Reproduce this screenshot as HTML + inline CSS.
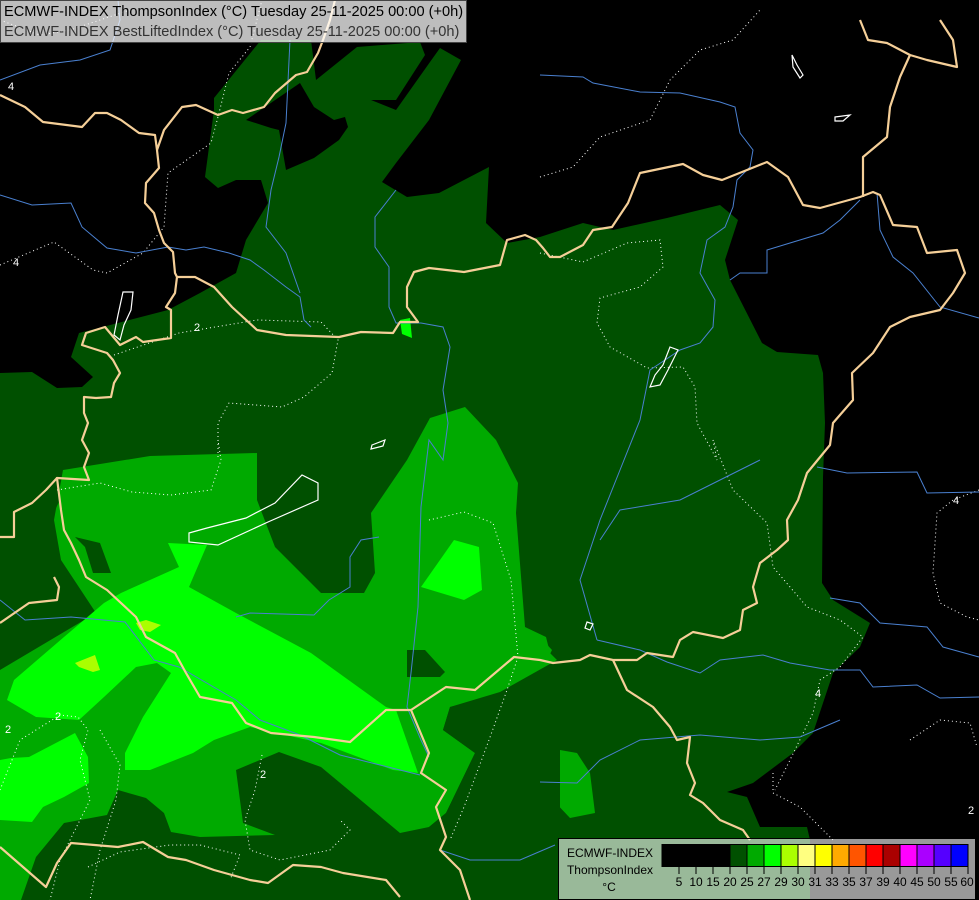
<!DOCTYPE html>
<html><head><meta charset="utf-8"><style>
html,body{margin:0;padding:0;background:#000;}
body{width:979px;height:900px;position:relative;overflow:hidden;font-family:"Liberation Sans",sans-serif;}
svg{position:absolute;left:0;top:0;}
</style></head><body>
<svg width="979" height="900" viewBox="0 0 979 900">
<rect width="979" height="900" fill="#000"/>
<polygon fill="#005000" points="0,373 32,372 57,388 82,387 93,377 71,357 79,333 118,323 168,310 200,293 236,273 246,240 268,203 261,180 236,180 218,188 205,177 214,110 214,98 261,40 311,40 316,80 357,47 420,42 425,55 396,100 371,100 396,110 430,62 440,48 461,60 429,120 396,163 382,182 407,197 439,193 489,167 486,223 507,243 540,237 583,223 613,230 667,218 720,205 738,220 725,260 730,280 762,343 777,352 818,355 823,373 825,423 823,477 822,583 833,600 870,623 860,647 833,673 813,733 793,753 753,783 727,792 747,797 760,827 807,827 810,840 810,900 0,900"/>
<polygon fill="#000" points="246,120 300,83 314,107 334,120 345,117 348,127 339,140 314,158 286,170 279,130 271,128"/>
<polygon fill="#00aa00" points="0,670 96,613 61,560 54,520 63,470 150,456 257,453 257,500 275,547 321,593 364,593 375,573 371,513 407,460 430,418 465,407 496,440 518,483 516,513 525,627 546,637 550,653 557,660 500,692 450,707 443,730 475,753 446,813 429,827 420,900 0,900"/>
<polygon fill="#00aa00" points="540,637 552,650 547,660 540,660"/>
<polygon fill="#00aa00" points="560,750 577,753 590,773 595,813 570,818 553,800 550,770"/>
<polygon fill="#005000" points="21,900 36,857 64,823 107,815 118,790 146,798 164,813 171,832 200,837 275,835 243,823 236,770 279,752 321,767 357,797 400,833 429,827 446,813 475,753 443,730 450,707 500,695 560,680 560,900"/>
<polygon fill="#005000" points="407,650 425,650 445,672 440,677 407,677"/>
<polygon fill="#005000" points="75,537 100,543 111,573 93,573 85,547"/>
<polygon fill="#005000" points="0,400 50,480 60,500 40,540 20,555 0,560"/>
<polygon fill="#00ff00" points="168,543 207,545 189,587 236,613 311,653 386,707 396,710 418,773 393,770 321,743 250,727 214,740 193,753 150,770 125,770 125,753 143,717 171,673 157,663 136,667 104,697 79,720 36,717 7,700 14,680 64,637 104,603 121,593 179,567"/>
<polygon fill="#00ff00" points="0,760 11,758 29,757 75,733 88,757 89,783 64,797 43,807 32,822 0,820"/>
<polygon fill="#00ff00" points="421,587 454,540 479,547 482,590 464,600"/>
<polygon fill="#00ff00" points="400,320 410,318 412,338 402,334"/>
<polygon fill="#aaff00" points="136,623 146,620 161,625 150,632 140,630"/>
<polygon fill="#aaff00" points="75,663 95,655 100,670 93,672 79,667"/>
<g fill="none" stroke="#fff" stroke-width="1" stroke-dasharray="1,3">
<polyline points="0,265 54,242 93,270 107,273 143,253 164,227 168,173 211,143 218,117 229,73 250,47 262,0"/>
<polyline points="114,355 179,333 257,320 321,322 338,340 332,373 304,397 282,407 229,403 218,423 218,460"/>
<polyline points="57,490 100,483 132,492 171,495 211,490 221,460 218,440"/>
<polyline points="429,520 464,512 493,523 511,580 518,657 507,690 489,740 464,807 450,840"/>
<polyline points="979,490 953,500 937,513 933,573 940,603 967,617 979,620"/>
<polyline points="910,740 940,720 970,723 977,747"/>
<polyline points="773,773 773,793 800,807 833,840"/>
<polyline points="540,177 573,167 600,137 650,120 670,80 700,50 733,40 760,10"/>
<polyline points="540,253 583,262 627,243 660,240 663,267 640,287 600,298 597,323 610,347 647,368 683,367 695,387 697,423 717,460 713,440 733,490 767,523 773,567 807,607 840,620 863,637 840,667 820,680 813,713 790,760 775,790"/>
<polyline points="0,790 20,740 60,715 78,717 88,730 80,760 90,800 60,860 50,900"/>
<polyline points="100,730 120,765 116,800 100,850 90,900"/>
<polyline points="262,755 255,790 245,820 250,850 280,860 330,850 350,830 340,820"/>
<polyline points="88,867 120,852 170,845 200,845 240,855 230,880"/>
<polyline points="0,20 40,35 70,30 100,20 130,10"/>
</g>
<g fill="none" stroke="#4a80d0" stroke-width="1">
<polyline points="0,195 32,205 71,203 82,227 107,248 136,253 168,247 186,250 204,247 229,253 250,260 264,270 286,287 300,297 304,320 311,327"/>
<polyline points="290,40 286,123 279,157 271,190 266,227 286,253 300,293"/>
<polyline points="396,190 375,217 375,247 389,267 389,307 396,323 421,323 443,327 450,347 443,390 448,423 443,460 429,440 421,507 418,607 411,673 407,707 421,740 429,757"/>
<polyline points="0,600 25,620 71,617 125,622 154,660 179,667 236,700 260,720 300,735 340,755 380,765 420,775"/>
<polyline points="236,617 250,613 314,615 329,600 350,587 350,557 361,540 379,537"/>
<polyline points="540,75 583,77 593,83 640,92 680,93 720,102 735,107 740,133 753,150 750,167 737,180 733,207 725,227 707,240 700,273 715,300 713,327 700,343 680,350 650,370 640,420 620,470 600,520 580,580 597,640"/>
<polyline points="597,640 640,650 667,662 700,673 720,660 763,655 790,663 830,670 860,670 873,687 917,685 940,698 979,697"/>
<polyline points="817,467 847,473 917,472 927,493 979,492"/>
<polyline points="830,598 860,603 880,623 927,627 943,647 979,657"/>
<polyline points="860,200 840,220 823,233 790,243 767,250 767,273 740,273 730,280"/>
<polyline points="877,193 880,230 893,257 913,273 940,307 979,318"/>
<polyline points="540,782 577,783 600,760 640,740 700,735 760,740 800,737 840,720"/>
<polyline points="0,80 40,65 80,60 110,50 120,20 118,0"/>
<polyline points="760,460 720,480 680,500 620,510 600,540"/>
<polyline points="440,850 470,860 520,860 555,845"/>
</g>
<g fill="none" stroke="#f5cf98" stroke-width="2.2" stroke-linejoin="round">
<polyline points="0,95 25,107 43,122 82,127 95,113 107,113 121,120 139,133 155,135 157,150 159,168 146,183 145,203 154,213 159,230 164,243 173,252 175,273 177,277 195,277 214,287 232,307 257,330 286,335 339,337 361,332 393,333 400,322 418,322 407,307 407,287 414,272 429,268 464,272 500,265 507,240 525,235 536,240 543,248 550,257 560,257 583,245 593,230 612,227 628,203 640,173 683,164 703,175 722,180 747,170 767,162 788,177 803,205 820,208 860,197 873,192 880,195 893,225 917,227 927,253 957,250 965,273 953,293 940,310 910,317 890,327 873,353 852,373 853,400 833,423 830,445 807,473 798,500 787,520 788,540 777,550 760,563 753,587 757,603 743,610 740,630 723,638 693,632 680,640 673,657 647,653 637,660 613,660 590,655 580,660 553,663 540,660 514,657 475,690 446,687 411,710 386,710 350,742 314,737 271,733 246,723 232,703 200,697 186,673 175,653 146,637 136,617 107,590 86,577 79,560 71,543 64,530 61,510 57,478 89,480 84,467 89,453 82,440 88,423 84,413 84,397 96,398 111,397 114,383 120,373 113,360 107,353 82,345 86,333 105,327 120,345 136,337 143,342 171,338 171,310 166,307 175,293 177,277"/>
<polyline points="157,150 164,130 182,107 196,105 218,115 232,110 243,113 264,107 275,93 296,75 307,72 318,53 323,40 330,20 335,0"/>
<polyline points="863,197 863,157 887,137 890,107 900,77 910,55 927,60 957,67 953,40 940,20"/>
<polyline points="910,55 887,43 868,40 860,20"/>
<polyline points="57,478 46,490 32,503 14,512 14,537 0,537"/>
<polyline points="54,577 59,587 57,600 29,603 0,623"/>
<polyline points="613,660 627,690 653,707 670,727 677,740 690,737 687,763 695,783 690,795 703,803 720,820 743,830 750,840"/>
<polyline points="411,710 429,753 421,773 446,790 436,807 446,837 440,850 460,870 470,900"/>
<polyline points="0,847 46,887 57,863 71,843 118,847 143,842 168,857 186,860 214,870 250,880 268,883 293,865 321,867 343,873 386,880 400,897"/>
</g>
<g fill="none" stroke="#fff" stroke-width="1.2">
<polygon points="189,533 189,542 218,545 268,522 318,500 318,483 302,475 275,503 246,518 207,528"/>
<polygon points="123,292 133,292 131,310 124,325 120,340 114,335 118,315"/>
<polygon points="670,347 678,350 668,370 660,385 650,387 655,375 663,365"/>
<polygon points="372,445 385,440 383,446 371,449"/>
<polygon points="792,55 797,65 803,75 800,78 793,67"/>
<polygon points="835,117 850,115 843,121 835,121"/>
<polygon points="587,622 593,624 590,630 585,628"/>
</g>
<g fill="#fff" font-family="Liberation Sans,sans-serif" font-size="11">
<text x="8" y="90">4</text><text x="13" y="266">4</text><text x="194" y="331">2</text>
<text x="55" y="720">2</text><text x="260" y="778">2</text><text x="815" y="697">4</text>
<text x="953" y="504">4</text><text x="968" y="814">2</text><text x="5" y="733">2</text>
</g>
<rect x="0.5" y="0.5" width="466" height="42" fill="rgba(255,255,255,0.74)" stroke="#444" stroke-width="1"/>
<text x="4" y="16" font-family="Liberation Sans,sans-serif" font-size="14.6" fill="#000">ECMWF-INDEX ThompsonIndex (°C) Tuesday 25-11-2025 00:00 (+0h)</text>
<text x="4" y="36" font-family="Liberation Sans,sans-serif" font-size="14.6" fill="#333">ECMWF-INDEX BestLiftedIndex (°C) Tuesday 25-11-2025 00:00 (+0h)</text>
<rect x="558.5" y="838.5" width="417" height="61" fill="rgba(255,255,255,0.6)" stroke="#000" stroke-width="1"/>
<g font-family="Liberation Sans,sans-serif" font-size="12" fill="#000" text-anchor="middle">
<text x="610" y="857">ECMWF-INDEX</text>
<text x="610" y="874">ThompsonIndex</text>
<text x="609" y="891">°C</text>
</g>
<g stroke="#000" stroke-width="1">
<rect x="662" y="844.5" width="17" height="22" fill="#000"/>
<rect x="679" y="844.5" width="17" height="22" fill="#000"/>
<rect x="696" y="844.5" width="17" height="22" fill="#000"/>
<rect x="713" y="844.5" width="17" height="22" fill="#000"/>
<rect x="730" y="844.5" width="17" height="22" fill="#005000"/>
<rect x="747" y="844.5" width="17" height="22" fill="#00aa00"/>
<rect x="764" y="844.5" width="17" height="22" fill="#00ff00"/>
<rect x="781" y="844.5" width="17" height="22" fill="#aaff00"/>
<rect x="798" y="844.5" width="17" height="22" fill="#ffff80"/>
<rect x="815" y="844.5" width="17" height="22" fill="#ffff00"/>
<rect x="832" y="844.5" width="17" height="22" fill="#ffaa00"/>
<rect x="849" y="844.5" width="17" height="22" fill="#ff5500"/>
<rect x="866" y="844.5" width="17" height="22" fill="#ff0000"/>
<rect x="883" y="844.5" width="17" height="22" fill="#aa0000"/>
<rect x="900" y="844.5" width="17" height="22" fill="#ff00ff"/>
<rect x="917" y="844.5" width="17" height="22" fill="#aa00ff"/>
<rect x="934" y="844.5" width="17" height="22" fill="#5500ff"/>
<rect x="951" y="844.5" width="17" height="22" fill="#0000ff"/>
<path d="M679,867v7M696,867v7M713,867v7M730,867v7M747,867v7M764,867v7M781,867v7M798,867v7M815,867v7M832,867v7M849,867v7M866,867v7M883,867v7M900,867v7M917,867v7M934,867v7M951,867v7M968,867v7"/>
</g>
<g font-family="Liberation Sans,sans-serif" font-size="12" fill="#000" text-anchor="middle">
<text x="679" y="886">5</text><text x="696" y="886">10</text><text x="713" y="886">15</text><text x="730" y="886">20</text>
<text x="747" y="886">25</text><text x="764" y="886">27</text><text x="781" y="886">29</text><text x="798" y="886">30</text>
<text x="815" y="886">31</text><text x="832" y="886">33</text><text x="849" y="886">35</text><text x="866" y="886">37</text>
<text x="883" y="886">39</text><text x="900" y="886">40</text><text x="917" y="886">45</text><text x="934" y="886">50</text>
<text x="951" y="886">55</text><text x="967" y="886">60</text>
</g>
</svg>
</body></html>
